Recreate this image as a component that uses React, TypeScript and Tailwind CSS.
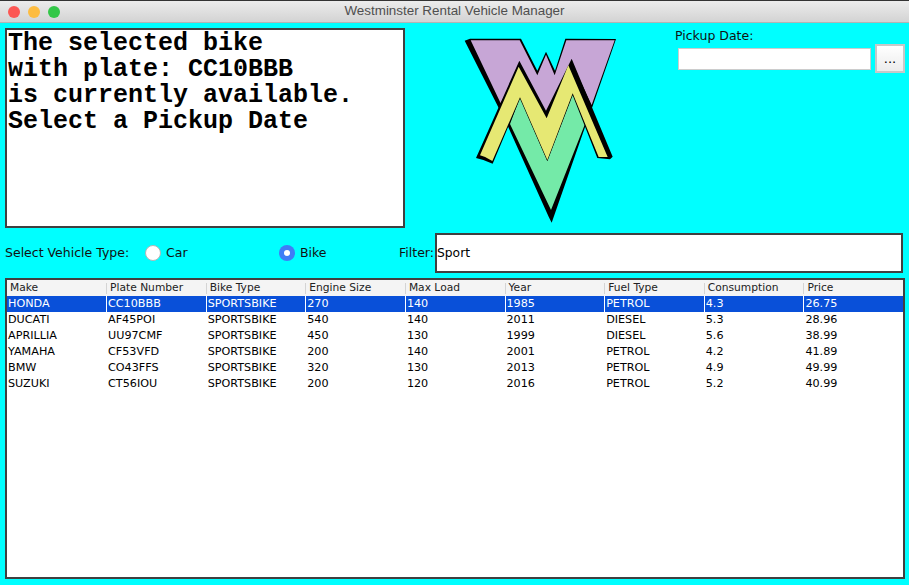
import React from 'react';

const columns = ['Make', 'Plate Number', 'Bike Type', 'Engine Size', 'Max Load', 'Year', 'Fuel Type', 'Consumption', 'Price'];

const rows = [
    ['HONDA', 'CC10BBB', 'SPORTSBIKE', '270', '140', '1985', 'PETROL', '4.3', '26.75'],
    ['DUCATI', 'AF45POI', 'SPORTSBIKE', '540', '140', '2011', 'DIESEL', '5.3', '28.96'],
    ['APRILLIA', 'UU97CMF', 'SPORTSBIKE', '450', '130', '1999', 'DIESEL', '5.6', '38.99'],
    ['YAMAHA', 'CF53VFD', 'SPORTSBIKE', '200', '140', '2001', 'PETROL', '4.2', '41.89'],
    ['BMW', 'CO43FFS', 'SPORTSBIKE', '320', '130', '2013', 'PETROL', '4.9', '49.99'],
    ['SUZUKI', 'CT56IOU', 'SPORTSBIKE', '200', '120', '2016', 'PETROL', '5.2', '40.99'],
];

const Logo = () => (
    <svg width="180" height="200" viewBox="0 24 540 600" className="shrink-0">
        {/* black shadows */}
        <path d="M44 62 L60 56 L213 56 L262 152 L288 95 L315 152 L346 56 L498 57 L428 258 L407 316 L305 608 L296 590 L172 315 Z" fill="#000" />
        {/* purple W */}
        <path d="M62 61 L209 61 L262 166 L288 104 L314 166 L349 61 L494 61 L425 255 L366 130 L290 292 L208 135 L152 250 Z" fill="#c7a6d6" />
        {/* green V */}
        <path d="M210 232 L292 422 L368 222 L405 312 L303 570 L180 312 Z" fill="#74eaa8" />
        {/* yellow M outline */}
        <path d="M78 414 L208 122 L288 272 L365 116 L488 410 L480 418 L442 414 L368 226 L292 424 L210 236 L128 431 L100 420 Z" fill="#000" />
        <path d="M90 406 L206 140 L290 295 L355 136 L473 411 L446 411 L368 220 L292 420 L210 232 L127 423 Q108 410 90 406 Z" fill="#e6e873" />
    </svg>
);

const Radio = ({ label, checked, className }: { label: string; checked?: boolean; className: string }) => (
    <div className={`flex items-center gap-[5px] ${className}`}>
        {checked ? (
            <span className="flex h-4 w-4 items-center justify-center rounded-full bg-[#3f7df6]">
                <span className="h-[6px] w-[6px] rounded-full bg-white" />
            </span>
        ) : (
            <span className="h-4 w-4 rounded-full border border-[#b5b5b5] bg-white" />
        )}
        <span>{label}</span>
    </div>
);

export default function App() {
    return (
        <div className="flex h-[585px] w-[909px] flex-col overflow-hidden bg-[#00ffff] font-['DejaVu_Sans',sans-serif] text-[12.5px] text-[#111]">
            <div className="relative flex h-[23px] shrink-0 items-center justify-center border-b border-[#b4b4b4] border-t border-t-[#333] bg-gradient-to-b from-[#ececec] to-[#d3d3d3]">
                <div className="absolute left-2 top-[5px] flex gap-2">
                    <span className="h-3 w-3 rounded-full bg-[#fc5753]" />
                    <span className="h-3 w-3 rounded-full bg-[#fdbc40]" />
                    <span className="h-3 w-3 rounded-full bg-[#33c748]" />
                </div>
                <span className="font-['Liberation_Sans',sans-serif] text-[13.4px] text-[#4f4f4f]">Westminster Rental Vehicle Manager</span>
            </div>

            <div className="box-content flex h-[200px] shrink-0 pl-[5px] pt-[5px]">
                <div className="h-[200px] w-[400px] shrink-0 border-2 border-[#404040] bg-white pt-px font-['Liberation_Mono',monospace] text-[25px] font-bold leading-[26px] text-black">
                    <div className="pl-px">The selected bike</div>
                    <div className="pl-px">with plate: CC10BBB</div>
                    <div className="pl-px">is currently available.</div>
                    <div className="pl-px">Select a Pickup Date</div>
                </div>
                <div className="ml-[45px]">
                    <Logo />
                </div>
                <div className="ml-[45px] flex flex-col">
                    <div className="h-[16px] leading-[16px]">Pickup Date:</div>
                    <div className="flex items-center">
                        <div className="ml-[3px] h-[22px] w-[193px] border border-[#cccccc] bg-white" />
                        <div className="ml-[4px] flex h-[29px] w-[30px] items-center justify-center border-2 border-[#c8c8c8] bg-gradient-to-b from-[#ffffff] to-[#ececec] text-[13px] leading-none text-black">...</div>
                    </div>
                </div>
            </div>

            <div className="mt-[5px] flex h-[40px] shrink-0 items-center pl-[5px]">
                <span className="w-[140px]">Select Vehicle Type:</span>
                <Radio label="Car" className="w-[134px]" />
                <Radio label="Bike" checked className="w-[120px]" />
                <span className="w-[36px]">Filter:</span>
                <div className="flex h-[40px] w-[468px] items-center border-2 border-[#404040] bg-white text-[12.3px] text-black">Sport</div>
            </div>

            <div className="ml-[5px] mt-[5px] h-[301px] w-[900px] shrink-0 border-2 border-[#404040] bg-white text-[11.2px] text-black">
                <div className="grid h-4 grid-cols-[99px_repeat(8,1fr)] bg-[#f4f4f4] text-[10.7px] text-[#222]">
                    {columns.map((col, i) => (
                        <div key={col} className="flex items-center">
                            {i > 0 && <span className="h-[11px] w-px shrink-0 bg-[#d4d4d4]" />}
                            <span className="pl-[3px] leading-4">{col}</span>
                        </div>
                    ))}
                </div>
                {rows.map((row, r) => (
                    <div key={row[1]} className={`grid h-4 grid-cols-[99px_repeat(8,1fr)] ${r === 0 ? 'bg-[#0950d9] text-white' : ''}`}>
                        {row.map((cell, c) => (
                            <div key={c} className={`pl-px leading-4 ${c > 0 ? (r === 0 ? 'border-l border-white' : 'border-l border-transparent') : ''}`}>
                                {cell}
                            </div>
                        ))}
                    </div>
                ))}
            </div>
        </div>
    );
}
